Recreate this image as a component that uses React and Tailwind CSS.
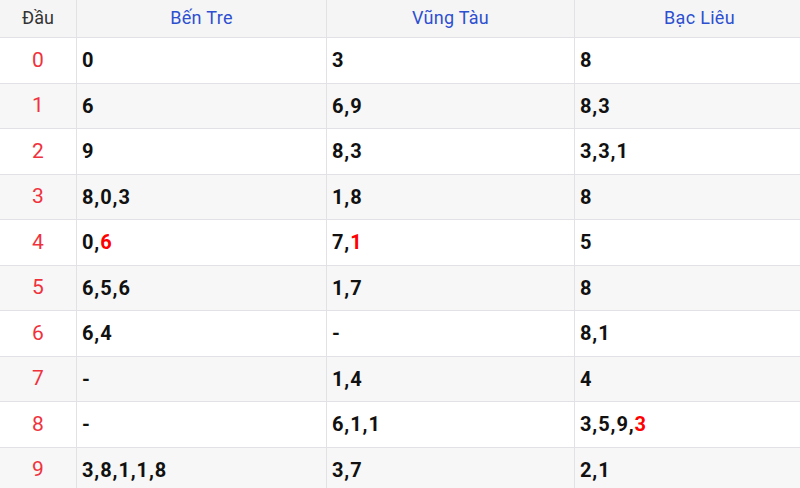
import React from "react";

const rows = [
    {dau: "0", cols: [["0"], ["3"], ["8"]]},
    {dau: "1", cols: [["6"], ["6,9"], ["8,3"]]},
    {dau: "2", cols: [["9"], ["8,3"], ["3,3,1"]]},
    {dau: "3", cols: [["8,0,3"], ["1,8"], ["8"]]},
    {dau: "4", cols: [["0,", "6"], ["7,", "1"], ["5"]]},
    {dau: "5", cols: [["6,5,6"], ["1,7"], ["8"]]},
    {dau: "6", cols: [["6,4"], ["-"], ["8,1"]]},
    {dau: "7", cols: [["-"], ["1,4"], ["4"]]},
    {dau: "8", cols: [["-"], ["6,1,1"], ["3,5,9,", "3"]]},
    {dau: "9", cols: [["3,8,1,1,8"], ["3,7"], ["2,1"]]},
];

const provinces = ["Bến Tre", "Vũng Tàu", "Bạc Liêu"];

const grid = "grid grid-cols-[77px_250px_248px_250px]";

const App = () => {
    return (
        <div className="w-[800px] h-[488px] overflow-hidden bg-white font-['Roboto',sans-serif]">
            <div className="w-[825px]">
                <div className={`${grid} h-[38px] bg-[#f5f5f5] border-b border-[#e2e2e6]`}>
                    <div className="flex items-center justify-center pb-[2px] text-[18px] text-[#333] border-r border-[#e2e2e6]">Đầu</div>
                    {
                        provinces.map((p) => (
                            <div key={p} className="flex items-center justify-center pb-[2px] text-[18px] tracking-[0.3px] text-[#2d4fd0] border-r border-[#e2e2e6]">{p}</div>
                        ))
                    }
                </div>
                {
                    rows.map((row, i) => (
                        <div key={row.dau} className={`${grid} h-[45.5px] border-b border-[#e2e2e6] ${i % 2 ? "bg-[#f7f7f7]" : "bg-white"}`}>
                            <div className="flex items-center justify-center text-[21px] text-[#f0323c] border-r border-[#e2e2e6]">{row.dau}</div>
                            {
                                row.cols.map((c, j) => (
                                    <div key={j} className="flex items-center pl-[5px] text-[20px] font-bold tracking-[0.9px] text-[#111] border-r border-[#e2e2e6]">
                                        {c[0]}
                                        {c[1] && <span className="text-[#f00]">{c[1]}</span>}
                                    </div>
                                ))
                            }
                        </div>
                    ))
                }
            </div>
        </div>
    );
};

export default App;
